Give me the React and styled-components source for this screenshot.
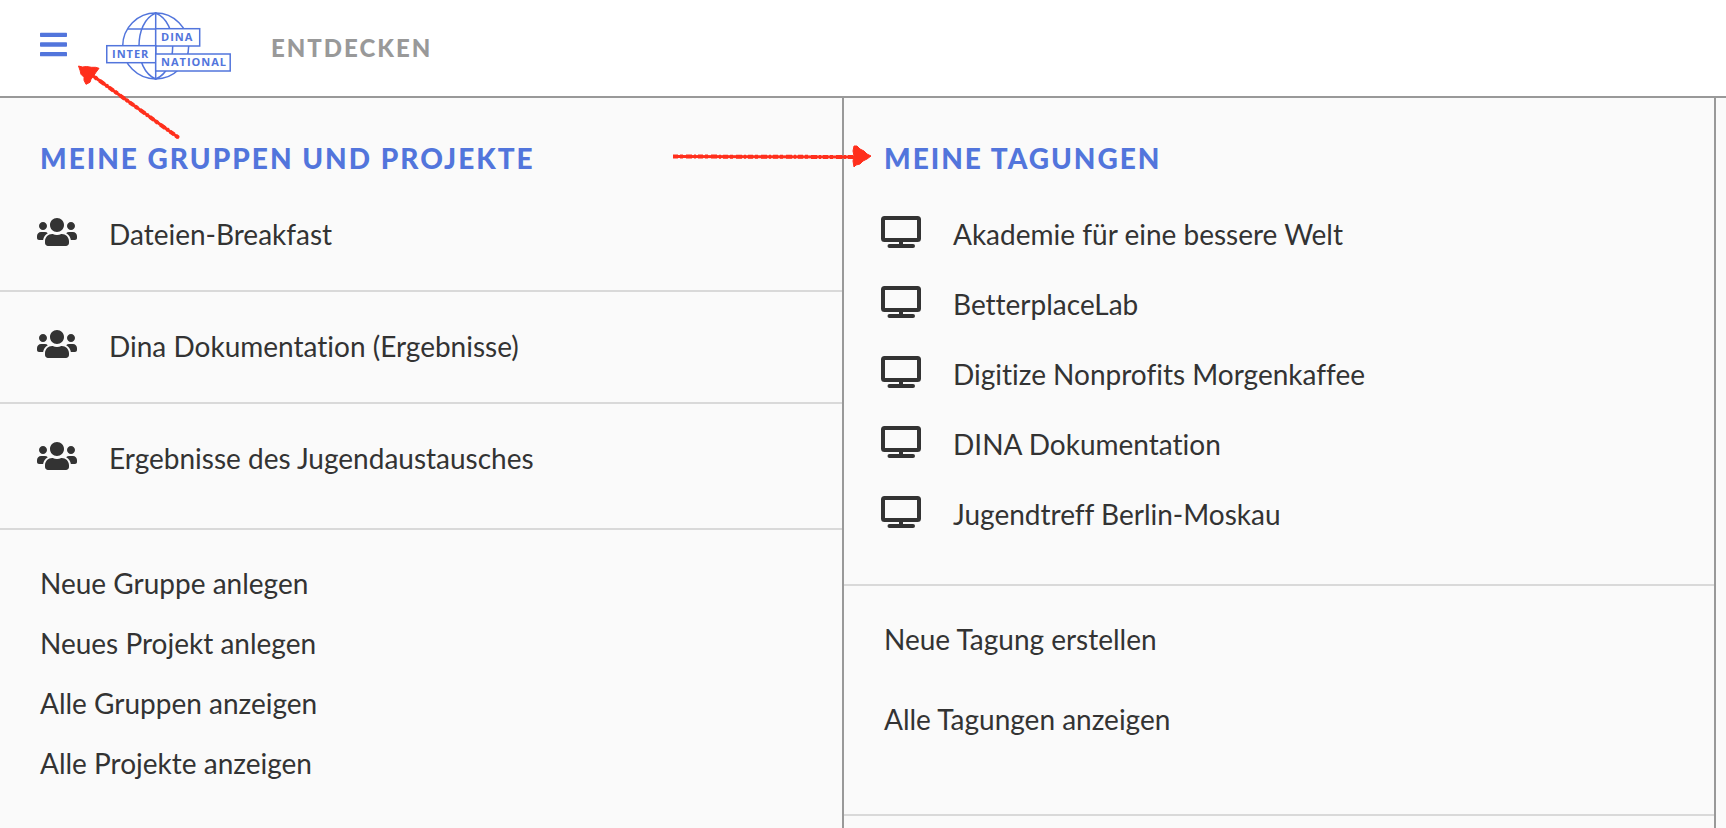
import React from "react";
import styled, { createGlobalStyle } from "styled-components";
import { FaBars, FaUsers } from "react-icons/fa";

const blue = "#5275dc";
const ink = "#333333";
const line = "#999999";
const rule = "#d9d9d9";
const red = "#ff2f1c";

const GlobalStyle = createGlobalStyle`
  *, *::before, *::after { box-sizing: border-box; }
  body {
    margin: 0;
    background: #fafafa;
    color: ${ink};
    font-family: Lato, "Open Sans", sans-serif;
    font-size: 28px;
    font-variant-ligatures: no-common-ligatures;
  }
  a { color: inherit; text-decoration: none; }
  ul { margin: 0; padding: 0; list-style: none; }
`;

const Page = styled.div`
  display: flex;
  flex-direction: column;
  min-height: 100vh;
`;

const Header = styled.header`
  position: relative;
  display: flex;
  align-items: center;
  height: 98px;
  padding: 0 40px 4px;
  background: #ffffff;
  border-bottom: 2px solid ${line};
`;

const MenuButton = styled.button`
  display: flex;
  margin: 0 39px 4px 0;
  padding: 0;
  border: 0;
  background: none;
  color: ${blue};
  cursor: pointer;

  svg {
    width: 27px;
    height: 31px;
  }
`;

const LogoLink = styled.a`
  display: flex;
  margin-right: 39px;
`;

const LogoText = styled.text`
  fill: ${blue};
  font-family: "Open Sans", sans-serif;
  font-size: 11px;
  font-weight: 700;
  letter-spacing: 1px;
`;

const NavLink = styled.a`
  color: ${line};
  font-size: 24px;
  font-weight: 900;
  line-height: 30px;
  letter-spacing: 2px;
  text-transform: uppercase;
`;

const Menu = styled.main`
  flex: 1;
  display: grid;
  grid-template-columns: 844fr 872fr 10fr;
`;

const Panel = styled.section`
  position: relative;
  border-right: 2px solid ${line};
`;

const PanelTitle = styled.h2`
  margin: 0;
  padding: 40px 40px 2px;
  color: ${blue};
  font-size: 28px;
  font-weight: 900;
  line-height: 40px;
  letter-spacing: 2px;
  text-transform: uppercase;
`;

const EntryList = styled.ul`
  padding: ${(p) => (p.$divided ? "0 0 14px" : "20px 0 34px")};
  border-bottom: 2px solid ${rule};
`;

const Entry = styled.li`
  height: ${(p) => (p.$divided ? 112 : 70)}px;
  border-bottom: ${(p) => (p.$divided ? `2px solid ${rule}` : "0")};

  &:last-child {
    height: ${(p) => (p.$divided ? 110 : 70)}px;
    border-bottom: 0;
  }
`;

const EntryLink = styled.a`
  display: flex;
  align-items: center;
  gap: 32px;
  height: 100%;
  padding: 0 37px 2px;

  svg {
    flex: none;
    width: 40px;
    height: 32px;
    margin-bottom: 4px;
  }
`;

const ActionList = styled.ul`
  display: flex;
  flex-direction: column;
  gap: ${(p) => (p.$spaced ? 20 : 0)}px;
  padding: 23px 40px ${(p) => (p.$spaced ? 65 : 25)}px;
  border-bottom: ${(p) => (p.$spaced ? `2px solid ${rule}` : "0")};
  line-height: 60px;
`;

const Pointer = styled.svg`
  position: absolute;
  top: ${(p) => p.$top}px;
  left: ${(p) => p.$left}px;
  z-index: 1;
  overflow: visible;
  pointer-events: none;
  fill: ${red};
  stroke: ${red};
  stroke-linejoin: round;
`;

function Logo() {
  return (
    <svg width="126" height="70" viewBox="0 0 126 70" role="img" aria-label="DINA International">
      <g fill="none" stroke={blue} strokeWidth="1.5">
        <circle cx="49.7" cy="35" r="33" />
        <path d="M49.7 2C38 7 33 21 33 35s5 28 16.7 33M49.7 2c12 5 17 19 17 33s-5 28-17 33M22 18h40M49.7 1v68" />
        <g fill="#ffffff">
          <rect x="49.7" y="17.7" width="44" height="17.3" />
          <rect x="0.75" y="34.7" width="49" height="17" />
          <rect x="49.7" y="43" width="74.5" height="17" />
        </g>
      </g>
      <LogoText x="55" y="30">DINA</LogoText>
      <LogoText x="6" y="47">INTER</LogoText>
      <LogoText x="55" y="55">NATIONAL</LogoText>
    </svg>
  );
}

function Monitor() {
  return (
    <svg viewBox="0 0 40 32" aria-hidden="true">
      <rect x="2" y="2" width="36" height="22" rx="1.5" fill="none" stroke="currentColor" strokeWidth="4" />
      <path d="M18 25h4v4h-4z" fill="currentColor" />
      <rect x="6.5" y="28" width="27.5" height="4" rx="2" fill="currentColor" />
    </svg>
  );
}

function MenuPointer() {
  return (
    <Pointer $top={60} $left={70} width="116" height="84" aria-hidden="true">
      <path d="M8.5 6l4 1 4-.5 5 .8 4 0 3.5 1-3 4-2 3-3 4-1 3-4 2-2-4 0-3-3-3-1-4z" strokeWidth="1" />
      <path d="M19 13L109 78" fill="none" strokeWidth="3" />
      <path d="M19 13L109 78" fill="none" strokeWidth="4" strokeDasharray="5 2 3 3 6 2 2 2" />
    </Pointer>
  );
}

function TitlePointer() {
  return (
    <Pointer $top={46} $left={-172} width="200" height="24" aria-hidden="true">
      <path d="M1 12.5L184 13" fill="none" strokeWidth="3" />
      <path d="M1 12.5L184 13" fill="none" strokeWidth="4" strokeDasharray="5 2 3 3 6 2 2 2" />
      <path d="M182 2l3 0 3 3 4 2 3 3 4 2-4 3-4 2-3 3-4 1-2 2-1-6 1-5-1-5z" strokeWidth="1" />
    </Pointer>
  );
}

const groups = ["Dateien-Breakfast", "Dina Dokumentation (Ergebnisse)", "Ergebnisse des Jugendaustausches"];
const groupActions = ["Neue Gruppe anlegen", "Neues Projekt anlegen", "Alle Gruppen anzeigen", "Alle Projekte anzeigen"];
const conferences = [
  "Akademie für eine bessere Welt",
  "BetterplaceLab",
  "Digitize Nonprofits Morgenkaffee",
  "DINA Dokumentation",
  "Jugendtreff Berlin-Moskau",
];
const conferenceActions = ["Neue Tagung erstellen", "Alle Tagungen anzeigen"];

function MenuPanel({ title, icon: Icon, entries, actions, divided, pointer }) {
  return (
    <Panel>
      {pointer}
      <PanelTitle>{title}</PanelTitle>
      <EntryList $divided={divided}>
        {entries.map((name) => (
          <Entry key={name} $divided={divided}>
            <EntryLink href="#">
              <Icon aria-hidden="true" />
              <span>{name}</span>
            </EntryLink>
          </Entry>
        ))}
      </EntryList>
      <ActionList $spaced={!divided}>
        {actions.map((name) => (
          <li key={name}>
            <a href="#">{name}</a>
          </li>
        ))}
      </ActionList>
    </Panel>
  );
}

export default function App() {
  return (
    <Page>
      <GlobalStyle />
      <Header>
        <MenuButton type="button" aria-label="Menü">
          <FaBars preserveAspectRatio="none" />
        </MenuButton>
        <LogoLink href="#" aria-label="DINA International">
          <Logo />
        </LogoLink>
        <nav>
          <NavLink href="#">Entdecken</NavLink>
        </nav>
        <MenuPointer />
      </Header>
      <Menu>
        <MenuPanel
          title="Meine Gruppen und Projekte"
          icon={FaUsers}
          entries={groups}
          actions={groupActions}
          divided
        />
        <MenuPanel
          title="Meine Tagungen"
          icon={Monitor}
          entries={conferences}
          actions={conferenceActions}
          pointer={<TitlePointer />}
        />
      </Menu>
    </Page>
  );
}
